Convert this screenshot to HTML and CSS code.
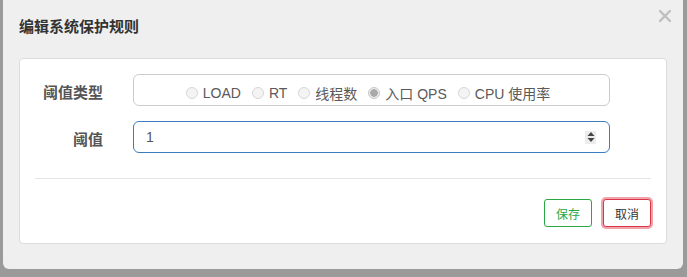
FILE: index.html
```html
<!DOCTYPE html>
<html lang="zh-CN">
<head>
    <meta charset="UTF-8">
    <title>编辑系统保护规则</title>
    <link rel="stylesheet" href="styles.css">
</head>
<body>
    <div class="modal">
        <div class="modal-header">
            <h4 class="modal-title">编辑系统保护规则</h4>
            <button class="close" type="button">
                <svg width="12" height="12" viewBox="0 0 12 12"><path d="M1 1 L11 11 M11 1 L1 11" stroke="#bfbfbf" stroke-width="2.4" stroke-linecap="square"/></svg>
            </button>
        </div>

        <div class="card">
            <div class="form-row">
                <label class="form-label">阈值类型</label>
                <div class="radio-box">
                    <label class="radio"><input type="radio" name="grade" disabled><span>LOAD</span></label>
                    <label class="radio"><input type="radio" name="grade" disabled><span>RT</span></label>
                    <label class="radio"><input type="radio" name="grade" disabled><span>线程数</span></label>
                    <label class="radio"><input type="radio" name="grade" checked disabled><span>入口 QPS</span></label>
                    <label class="radio"><input type="radio" name="grade" disabled><span>CPU 使用率</span></label>
                </div>
            </div>

            <div class="form-row">
                <label class="form-label">阈值</label>
                <div class="number-box">
                    <input class="number-input" type="text" value="1">
                    <span class="spinner">
                        <svg width="10" height="12" viewBox="0 0 10 12"><path d="M5 1 L8.5 5 L1.5 5 Z M1.5 7 L8.5 7 L5 11 Z" fill="#444"/></svg>
                    </span>
                </div>
            </div>

            <hr class="divider">

            <div class="actions">
                <button class="btn btn-save">保存</button>
                <button class="btn btn-cancel">取消</button>
            </div>
        </div>
    </div>
</body>
</html>
```

FILE: styles.css
```css
body {
    margin: 0;
    background-color: #9a9a9a;
    font-family: "Liberation Sans", "Noto Sans CJK SC", sans-serif;
    color: #555;
}

.modal {
    width: 680px;
    height: 269px;
    margin-left: 3px;
    background: #efefef;
    border-radius: 0 0 6px 6px;
    box-sizing: border-box;
}

.modal-header {
    height: 58px;
    display: flex;
    justify-content: space-between;
    align-items: flex-start;
    padding: 0 12px 0 16px;
    box-sizing: border-box;
}

.modal-title {
    margin: 0;
    padding-top: 17px;
    font-size: 15px;
    line-height: 20px;
    font-weight: bold;
    color: #333;
}

.close {
    margin-top: 10px;
    padding: 0;
    border: none;
    background: none;
    width: 12px;
    height: 12px;
    display: flex;
}

/* white panel */
.card {
    margin: 0 16px;
    height: 186px;
    background: white;
    border: 1px solid #dcdcdc;
    border-radius: 4px;
    padding: 15px;
    box-sizing: border-box;
}

.form-row {
    display: grid;
    grid-template-columns: 68px 477px;
    column-gap: 30px;
    margin-bottom: 15px;
}

.form-label {
    text-align: right;
    font-size: 15px;
    font-weight: bold;
    line-height: 20px;
    padding-top: 9px;
    color: #555;
}

.radio-box {
    height: 32px;
    border: 1px solid #ccc;
    border-radius: 6px;
    box-sizing: border-box;
    display: flex;
    justify-content: center;
    align-items: center;
    gap: 11px;
    padding: 5px 7px 0 0;
}

.radio {
    display: flex;
    align-items: center;
    gap: 5px;
    font-size: 14px;
    color: #5a5a5a;
}

.radio input {
    appearance: none;
    -webkit-appearance: none;
    margin: 0;
    width: 12px;
    height: 12px;
    border: 1px solid #d6d6d6;
    border-radius: 50%;
    background: #f4f4f4;
    box-sizing: border-box;
}

.radio input:checked {
    border-color: #c8c8c8;
    background: radial-gradient(circle, #a9a9a9 0 3.5px, #ececec 4px);
}

.number-box {
    height: 32px;
    border: 1px solid #3b7cbf;
    border-radius: 6px;
    box-sizing: border-box;
    display: flex;
    align-items: center;
    padding: 0 13px 0 12px;
}

.number-input {
    flex: 1;
    border: none;
    outline: none;
    padding: 0;
    font-family: inherit;
    font-size: 14px;
    color: #555;
    background: none;
}

.spinner {
    width: 11px;
    height: 13px;
    background: #ececec;
    display: flex;
    align-items: center;
    justify-content: center;
}

.divider {
    margin: 25px 0 20px;
    border: none;
    border-top: 1px solid #e5e5e5;
}

.actions {
    display: flex;
    justify-content: flex-end;
    gap: 11px;
}

.btn {
    height: 28px;
    padding: 0 11px;
    font-family: inherit;
    font-size: 12px;
    background: white;
    border: 1px solid;
    border-radius: 3px;
}

.btn-save {
    color: #28a745;
    border-color: #28a745;
}

.btn-cancel {
    color: #333;
    border-color: #dc3545;
    box-shadow: 0 0 0 2px rgba(220, 53, 69, 0.45);
}
```
